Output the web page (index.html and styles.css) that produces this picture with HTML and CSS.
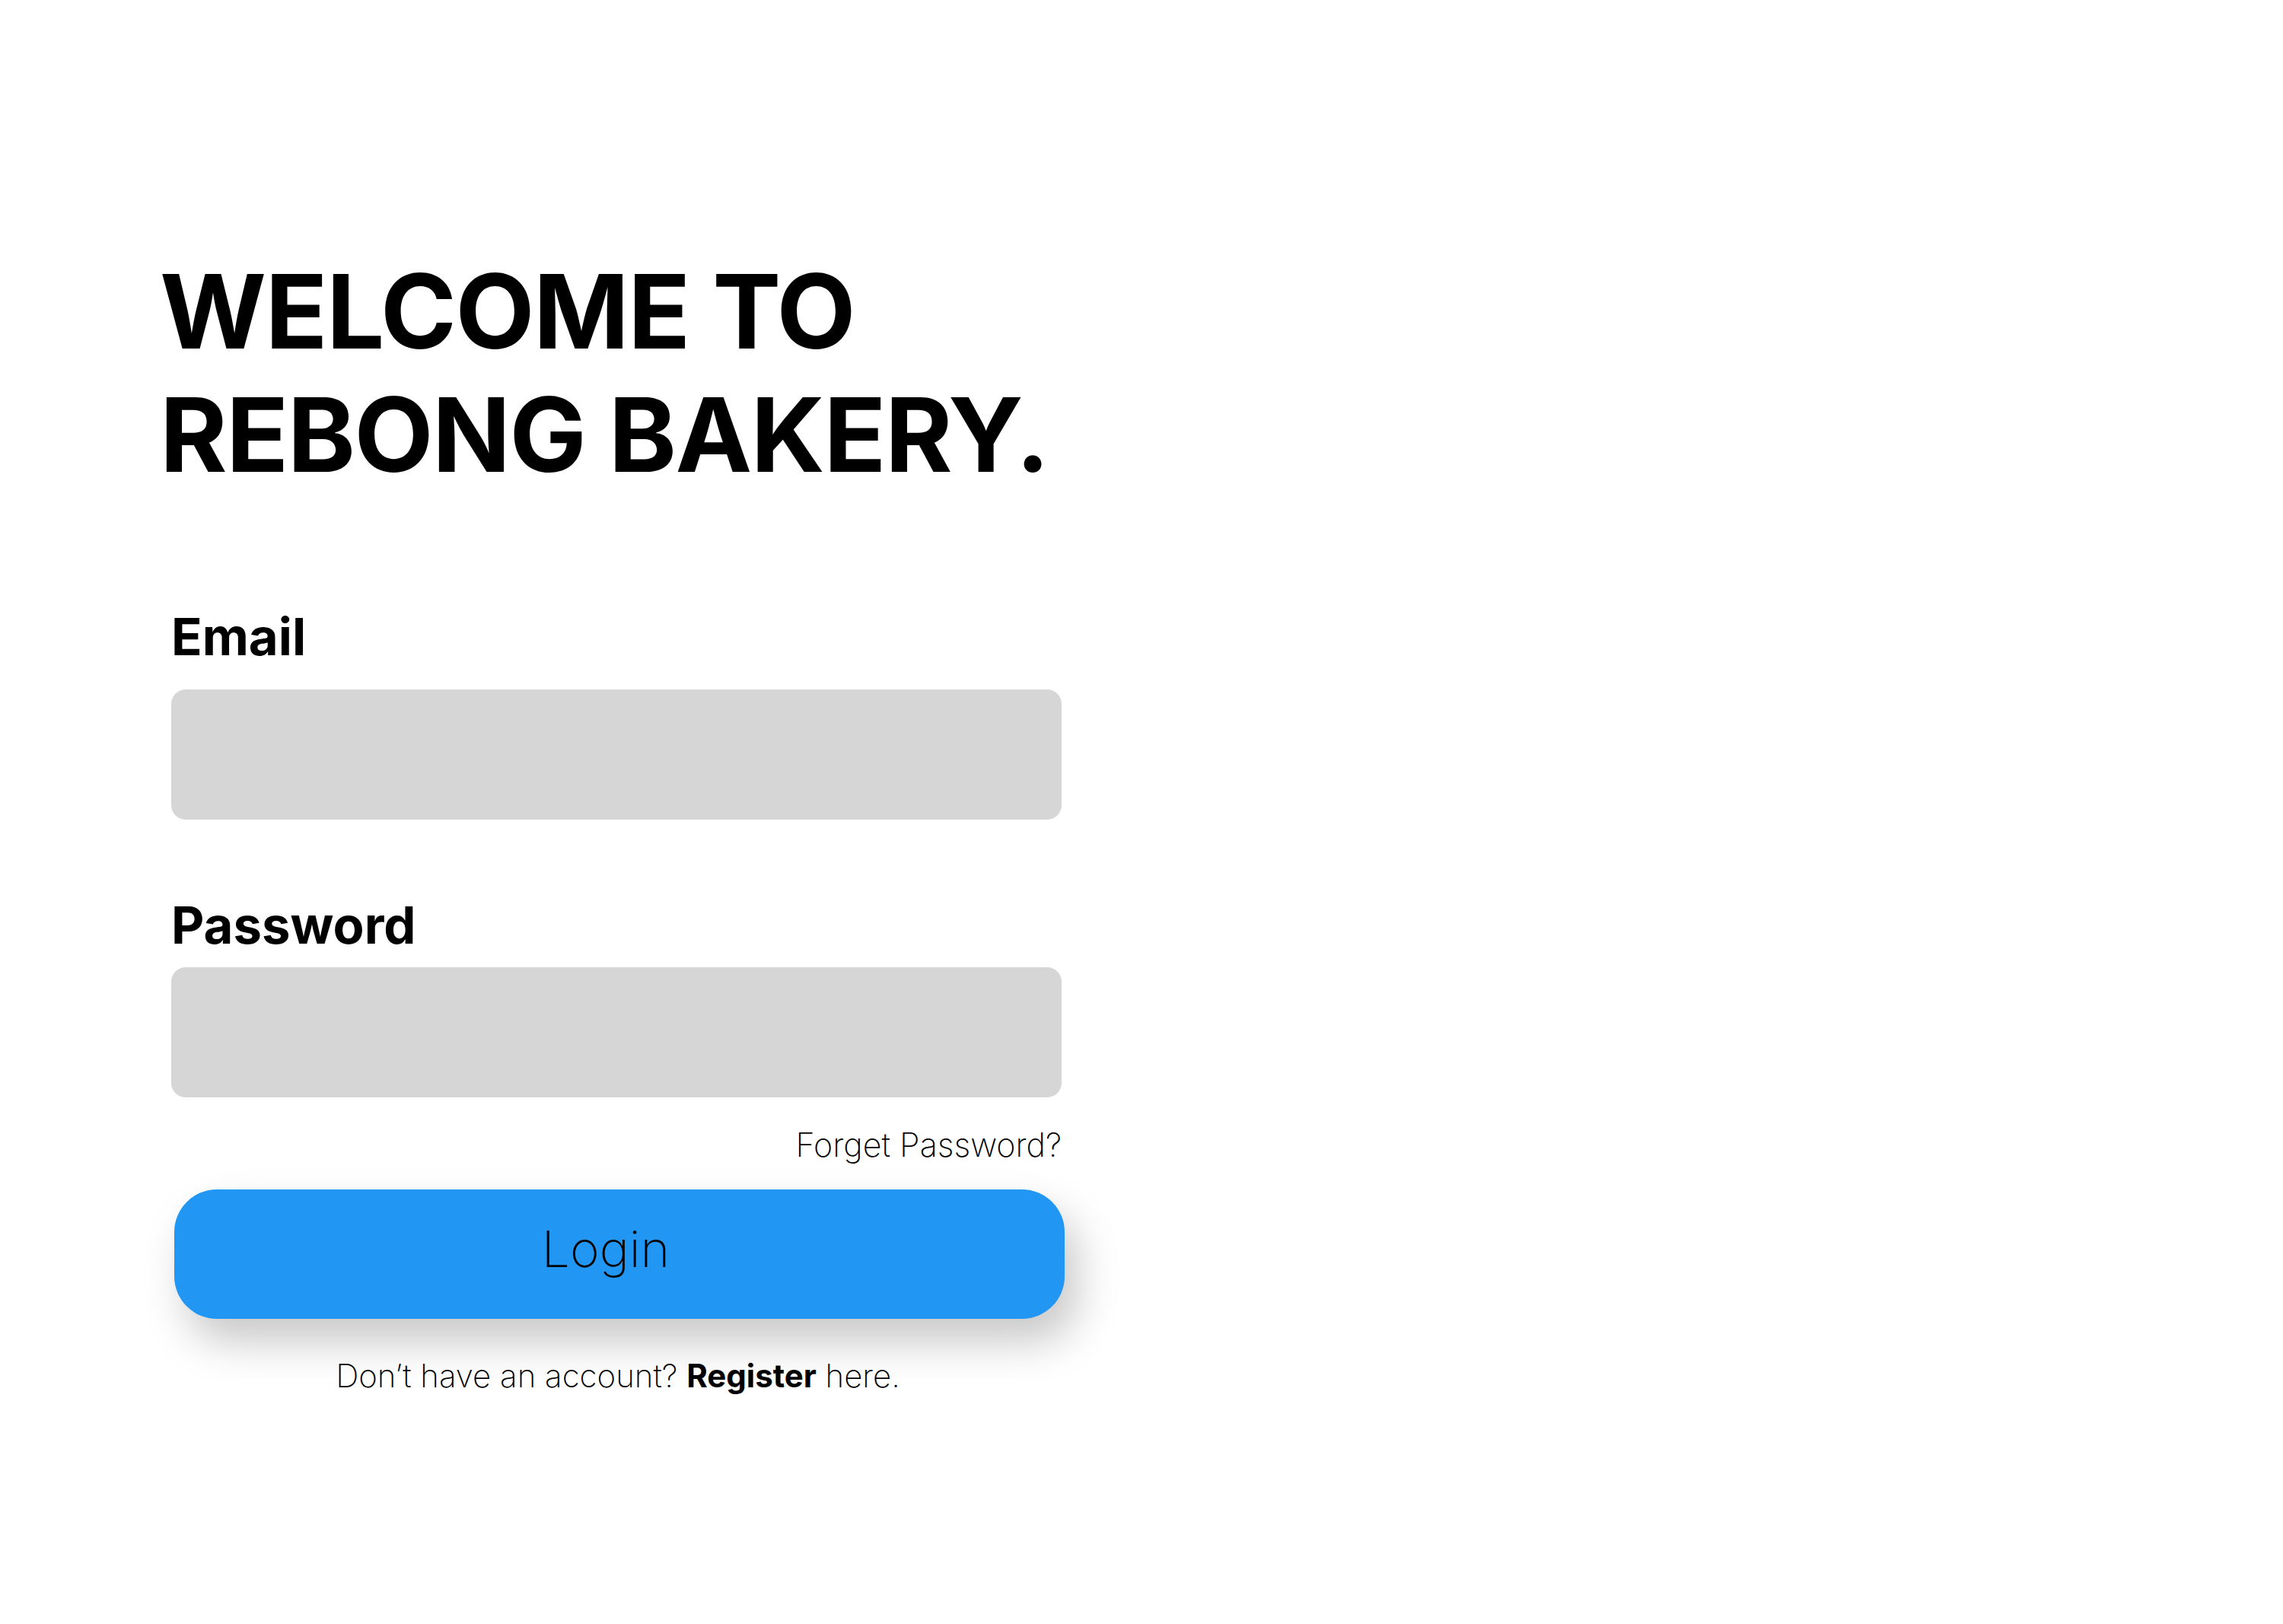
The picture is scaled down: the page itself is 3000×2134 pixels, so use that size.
FILE: index.html
```html
<!DOCTYPE html>
<html lang="en">
<head>
<meta charset="utf-8">
<title>Rebong Bakery - Login</title>
<link rel="stylesheet" href="styles.css">
</head>
<body>
<main class="page">
  <h1 class="title">WELCOME TO<br>REBONG BAKERY.</h1>
  <form class="form">
    <label class="label label-email" for="email">Email</label>
    <input class="field" id="email" type="email">
    <label class="label label-password" for="password">Password</label>
    <input class="field" id="password" type="password">
    <a class="forgot" href="#">Forget Password?</a>
    <button class="login" type="button">Login</button>
    <p class="register">Don’t have an account? <strong>Register</strong> here.</p>
  </form>
</main>
</body>
</html>
```
FILE: styles.css
```css
html, body {
  margin: 0;
  padding: 0;
  background: #ffffff;
}

body {
  width: 3000px;
  height: 2134px;
  font-family: Inter, "Noto Sans", sans-serif;
  color: #000000;
}

.page {
  padding: 328px 0 0 210px;
  display: flex;
  flex-direction: column;
}

.title {
  margin: 0;
  font-size: 135px;
  line-height: 162px;
  font-weight: 700;
  letter-spacing: -1.5px;
}

.form {
  margin: 145px 0 0 15px;
  width: 1170px;
  display: flex;
  flex-direction: column;
}

.label {
  font-size: 67px;
  line-height: 80px;
  font-weight: 700;
}

.label-email {
  margin-bottom: 29px;
}

.label-password {
  margin-top: 99px;
  margin-bottom: 15px;
}

.field {
  box-sizing: border-box;
  width: 1170px;
  height: 171px;
  border: none;
  border-radius: 19px;
  background: #d6d6d6;
  margin: 0;
  padding: 0;
}

.forgot {
  align-self: flex-end;
  margin-top: 38px;
  font-size: 43px;
  line-height: 48px;
  font-weight: 200;
  color: #000000;
  text-decoration: none;
}

.login {
  margin: 35px 0 0 4px;
  width: 1170px;
  height: 170px;
  border: none;
  border-radius: 56px;
  background: #2196f3;
  box-shadow: 16px 30px 55px rgba(0, 0, 0, 0.22);
  font-family: Inter, "Noto Sans", sans-serif;
  font-size: 66px;
  font-weight: 200;
  color: #000000;
  padding: 0 36px 14px 0;
  display: flex;
  align-items: center;
  justify-content: center;
}

.register {
  margin: 51px 0 0 4px;
  text-align: center;
  font-size: 42px;
  line-height: 48px;
  font-weight: 200;
}

.register strong {
  font-weight: 700;
}
```
